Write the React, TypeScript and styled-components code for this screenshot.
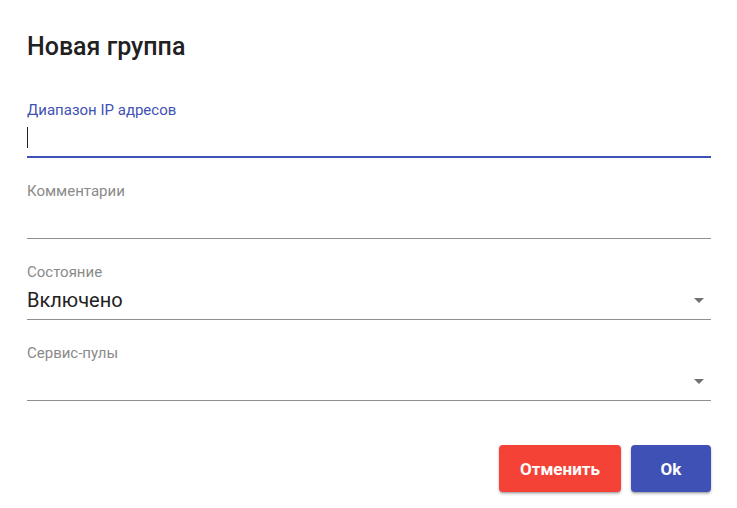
import React from 'react';
import styled, { createGlobalStyle } from 'styled-components';

const GlobalStyle = createGlobalStyle`
  html, body {
    margin: 0;
    padding: 0;
    background: #ffffff;
    font-family: Roboto, "Noto Sans", Arial, sans-serif;
  }
`;

const Dialog = styled.div`
  width: 737px;
  height: 508px;
  box-sizing: border-box;
  padding: 0 26px 0 27px;
  background: #ffffff;
  display: flex;
  flex-direction: column;
`;

const Title = styled.h2`
  margin: 0;
  padding-top: 33px;
  height: 77px;
  box-sizing: border-box;
  font-size: 25px;
  line-height: 28px;
  font-weight: 500;
  color: #212121;
`;

const Field = styled.div`
  height: 81px;
  padding-top: 24px;
  box-sizing: border-box;
  display: flex;
  flex-direction: column;
`;

const Label = styled.label<{ $focused?: boolean }>`
  height: 18px;
  line-height: 18px;
  font-size: 15px;
  color: ${p => (p.$focused ? '#3f51b5' : '#8a8a8a')};
`;

const InputRow = styled.div<{ $focused?: boolean }>`
  flex: 1;
  display: flex;
  align-items: center;
  border-bottom: ${p => (p.$focused ? '2px solid #3f51b5' : '1px solid #8f8f8f')};
`;

const Value = styled.div`
  flex: 1;
  font-size: 20px;
  line-height: 24px;
  color: #212121;
`;

const Caret = styled.span`
  display: block;
  width: 1px;
  height: 21px;
  background: #212121;
`;

const Arrow = styled.svg`
  width: 24px;
  height: 24px;
  fill: #707070;
`;

const Actions = styled.div`
  display: flex;
  justify-content: flex-end;
  gap: 10px;
  margin-top: 44px;
`;

const Button = styled.button<{ $color: string; $width: number }>`
  width: ${p => p.$width}px;
  height: 47px;
  border: none;
  border-radius: 4px;
  background: ${p => p.$color};
  color: #ffffff;
  font-family: Roboto, "Noto Sans", Arial, sans-serif;
  font-size: 17px;
  font-weight: 700;
  box-shadow: 0 2px 3px rgba(0, 0, 0, 0.25), 0 1px 1px rgba(0, 0, 0, 0.14);
  cursor: pointer;
`;

const DropArrow = () => (
  <Arrow viewBox="0 0 24 24">
    <path d="M7 10l5 5 5-5z" />
  </Arrow>
);

export default function App() {
  return (
    <>
      <GlobalStyle />
      <Dialog>
        <Title>Новая группа</Title>
        <Field>
          <Label $focused>Диапазон IP адресов</Label>
          <InputRow $focused>
            <Caret />
          </InputRow>
        </Field>
        <Field>
          <Label>Комментарии</Label>
          <InputRow />
        </Field>
        <Field>
          <Label>Состояние</Label>
          <InputRow>
            <Value>Включено</Value>
            <DropArrow />
          </InputRow>
        </Field>
        <Field>
          <Label>Сервис-пулы</Label>
          <InputRow>
            <Value />
            <DropArrow />
          </InputRow>
        </Field>
        <Actions>
          <Button $color="#f44336" $width={122}>Отменить</Button>
          <Button $color="#3f51b5" $width={80}>Ok</Button>
        </Actions>
      </Dialog>
    </>
  );
}
